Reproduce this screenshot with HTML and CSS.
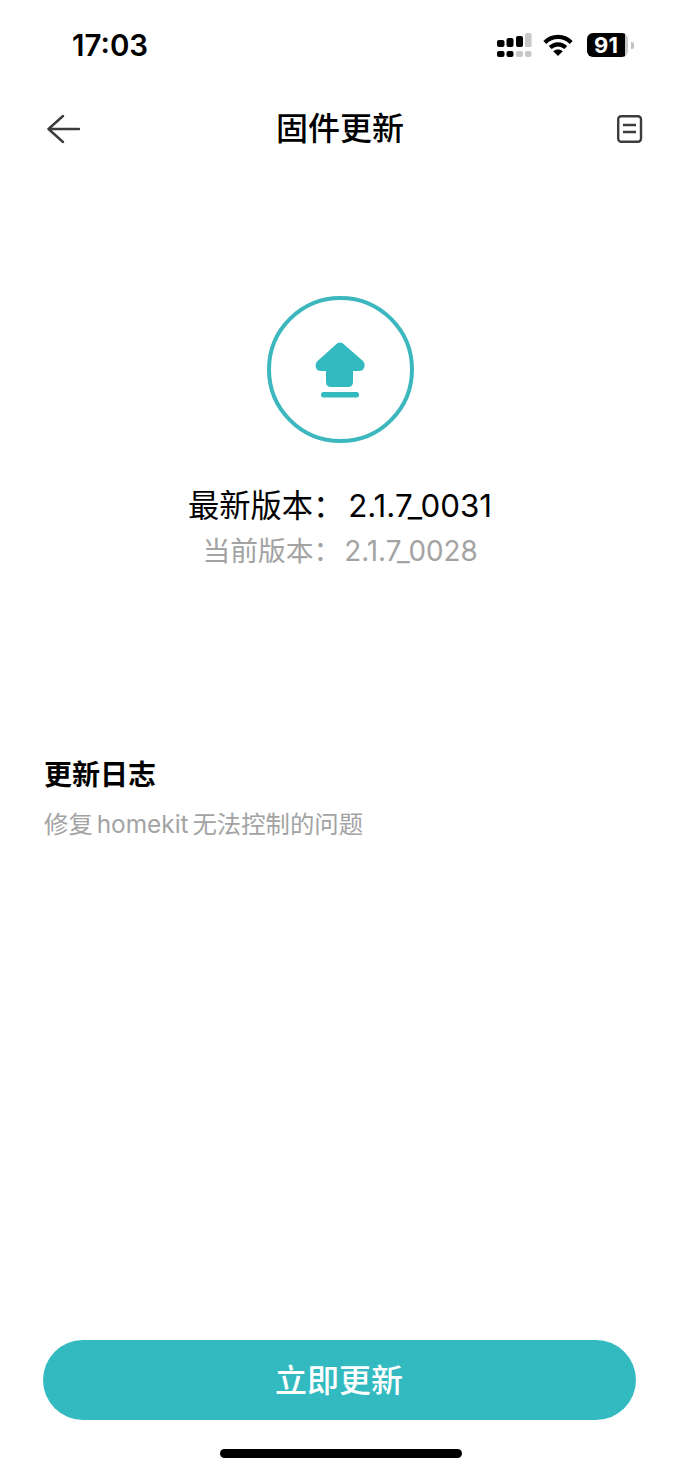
FILE: index.html
```html
<!doctype html>
<html lang="zh-CN">
<head>
    <meta charset="UTF-8">
    <meta name="viewport" content="width=device-width, initial-scale=1.0">
    <title>固件更新</title>
    <link rel="stylesheet" href="styles.css">
</head>
<body>
    <div class="screen">
        <div class="status-bar">
            <span class="clock">17:03</span>
            <div class="status-icons">
                <svg width="36" height="24" viewBox="0 0 36 24">
                    <g fill="#000">
                        <rect x="0" y="7" width="7.500" height="7" rx="2"/>
                        <rect x="9.500" y="5" width="7" height="9" rx="2"/>
                        <rect x="19" y="3" width="7" height="11" rx="2"/>
                        <rect x="0" y="18" width="7.500" height="6" rx="2"/>
                        <rect x="9.500" y="18" width="7" height="6" rx="2"/>
                    </g>
                    <g fill="#c8c8c8">
                        <rect x="28" y="0" width="6.500" height="14" rx="1.500"/>
                        <rect x="19" y="18" width="7" height="6" rx="2"/>
                        <rect x="28" y="18" width="6.500" height="6" rx="2"/>
                    </g>
                </svg>
                <svg class="wifi" width="30" height="22" viewBox="0 0 30 22">
                    <g fill="none" stroke="#000" stroke-width="4.200">
                        <path d="M1.800 8.500C9.300 1 20.700 1 28.200 8.500"/>
                        <path d="M7.200 13.600C11.800 9.200 18.200 9.200 22.800 13.600"/>
                    </g>
                    <path d="M15 22 10.200 17.200C13 15 17 15 19.800 17.200Z" fill="#000"/>
                </svg>
                <div class="battery">
                    <div class="battery-body">
                        <span class="battery-level">91</span>
                        <span class="battery-rest"></span>
                    </div>
                    <span class="battery-cap"></span>
                </div>
            </div>
        </div>

        <header class="nav-bar">
            <svg class="back-icon" width="36" height="30" viewBox="0 0 36 30">
                <path d="M16 2 1.500 15 16 28M1.500 15H32" fill="none" stroke="#3c3c3c" stroke-width="2.400" stroke-linecap="round" stroke-linejoin="round"/>
            </svg>
            <h1>固件更新</h1>
            <svg class="log-icon" width="27" height="30" viewBox="0 0 27 30">
                <rect x="2.200" y="2.200" width="22.800" height="25.600" rx="3" fill="none" stroke="#3c3c3c" stroke-width="2.400"/>
                <path d="M7 11H20M7 18H20" fill="none" stroke="#3c3c3c" stroke-width="2.400"/>
            </svg>
        </header>

        <main class="content">
            <div class="update-circle">
                <svg width="50" height="56" viewBox="0 0 50 56">
                    <path d="M22 1.500Q25 -.5 28 1.500L48 19Q50.500 21.500 49 26Q48 29 44 29H38V40Q38 45 33 45H16Q11 45 11 40V29H6Q2 29 1 26Q0 22 2 19.500Z" fill="#33bac1"/>
                    <rect x="6" y="50" width="38" height="5.500" rx="2.500" fill="#33bac1"/>
                </svg>
            </div>
            <p class="version-new">最新版本： 2.1.7_0031</p>
            <p class="version-current">当前版本： 2.1.7_0028</p>

            <section class="changelog">
                <h2>更新日志</h2>
                <p>修复 homekit 无法控制的问题</p>
            </section>
        </main>

        <footer class="footer">
            <button class="update-btn">立即更新</button>
            <div class="home-indicator"></div>
        </footer>
    </div>
</body>
</html>
```

FILE: styles.css
```css
:root {
    --teal: #33bac1;
    --grey-text: #a3a3a3;
}

* {
    box-sizing: border-box;
}

body {
    margin: 0;
    background: #fff;
    color: #000;
    font-family: "Inter", "Noto Sans CJK SC", sans-serif;
}

.screen {
    width: 680px;
    height: 1472px;
    display: flex;
    flex-direction: column;
    overflow: hidden;
}

.status-bar {
    height: 92px;
    padding: 24px 46px 0 72px;
    display: flex;
    justify-content: space-between;
    align-items: flex-start;
}

.clock {
    font-size: 29.500px;
    font-weight: 600;
    line-height: 42px;
}

.status-icons {
    display: flex;
    align-items: center;
    gap: 12px;
    height: 42px;
}

.wifi {
    margin: -1px 2px 0 -2px;
}

.battery {
    display: flex;
    align-items: center;
    gap: 3px;
}

.battery-body {
    width: 41px;
    height: 24px;
    border-radius: 6px;
    display: flex;
    overflow: hidden;
}

.battery-level {
    flex: 1;
    background: #000;
    color: #fff;
    font-size: 22px;
    font-weight: 700;
    line-height: 24px;
    text-align: center;
}

.battery-rest {
    width: 3px;
    background: #c8c8c8;
}

.battery-cap {
    width: 3px;
    height: 7px;
    background: #c0c0c0;
    border-radius: 0 2px 2px 0;
}

.nav-bar {
    height: 72px;
    padding: 0 37px;
    display: grid;
    grid-template-columns: 1fr auto 1fr;
    align-items: center;
}

.back-icon {
    margin-left: 10px;
}

.log-icon {
    justify-self: end;
}

.nav-bar h1 {
    margin: 0;
    padding-top: 1px;
    font-size: 32px;
    font-weight: 500;
    line-height: 72px;
}

.content {
    flex: 1;
    display: flex;
    flex-direction: column;
    align-items: center;
    padding-top: 132px;
}

.update-circle {
    width: 147px;
    height: 147px;
    border: 4px solid #3bb7bd;
    border-radius: 50%;
    display: flex;
    justify-content: center;
    align-items: center;
}

.version-new {
    margin: 39px 0 0;
    font-size: 31.300px;
    line-height: 48px;
    word-spacing: -5px;
}

.version-current {
    margin: 1px 0 0;
    font-size: 27.800px;
    line-height: 40px;
    word-spacing: -5px;
    color: var(--grey-text);
}

.changelog {
    align-self: stretch;
    padding: 0 44px;
    margin-top: 184px;
}

.changelog h2 {
    margin: 0;
    font-size: 28px;
    font-weight: 600;
    line-height: 40px;
}

.changelog p {
    margin: 9px 0 0;
    font-size: 24.400px;
    line-height: 40px;
    word-spacing: -3px;
    color: var(--grey-text);
}

.footer {
    padding: 0 45px 0 43px;
    height: 132px;
    display: flex;
    flex-direction: column;
    align-items: center;
}

.update-btn {
    width: 593px;
    height: 80px;
    padding: 0 0 4px;
    border: none;
    border-radius: 40px;
    background: var(--teal);
    color: #fff;
    font-family: inherit;
    font-size: 32px;
    font-weight: 500;
    cursor: pointer;
}

.home-indicator {
    width: 242px;
    height: 9px;
    margin: 29px 0 0 3px;
    border-radius: 5px;
    background: #000;
}
```
